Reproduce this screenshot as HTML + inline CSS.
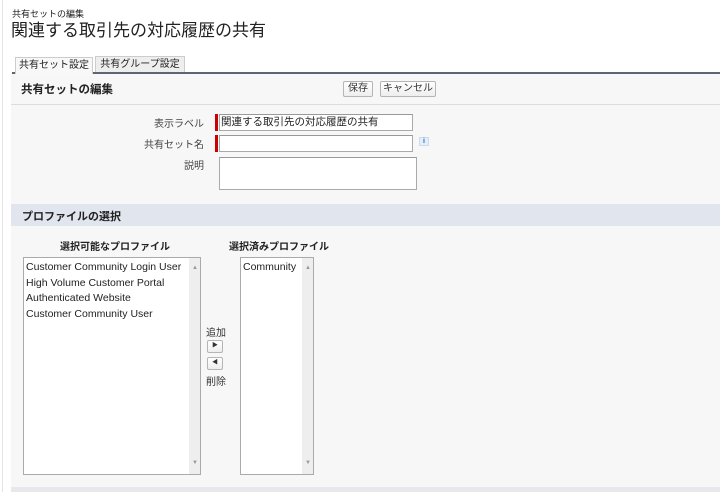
<!DOCTYPE html>
<html><head><meta charset="utf-8"><style>
*{margin:0;padding:0;box-sizing:border-box}
body{width:720px;height:492px;overflow:hidden;background:#fff;font-family:"Liberation Sans","Noto Sans CJK JP",sans-serif;color:#222;position:relative}
.a{position:absolute}
.t{font-size:10px}
.lbl{position:absolute;left:100px;width:104px;text-align:right;font-size:10px;color:#444}
.inp{position:absolute;background:#fff;border:1px solid #aaa;border-top-color:#999}
.red{position:absolute;width:3px;background:#c00}
.btn{position:absolute;border:1px solid #b5b5b5;border-radius:2px;background:linear-gradient(#fff,#eee);font-size:10px;text-align:center;line-height:14px;color:#333}
.list{position:absolute;background:#fff;border:1px solid #aaa;font-size:10.5px;color:#222;line-height:15.5px;padding:2px 0 0 2px}
.sb{position:absolute;top:0;right:0;bottom:0;width:11px;background:#eee}
.arr{position:absolute;right:2px;font-size:6px;color:#999}
</style></head><body>
<div class="a" style="left:2px;top:0;width:1px;height:492px;background:#e4e4e4"></div>
<div class="a t" style="left:12px;top:7px;font-size:9px">共有セットの編集</div>
<div class="a" style="left:11px;top:16px;font-size:17px;color:#222">関連する取引先の対応履歴の共有</div>
<div class="a" style="left:12px;top:72px;width:708px;height:2px;background:#5d6473"></div>
<div class="a" style="left:15px;top:57px;width:78px;height:17px;background:#f8f8f8;border:1px solid #ccc;border-bottom:none;font-size:10px;text-align:center;line-height:16px">共有セット設定</div>
<div class="a" style="left:95px;top:56px;width:90px;height:16px;background:#eee;border:1px solid #ccc;border-bottom:none;font-size:10px;text-align:center;line-height:16px">共有グループ設定</div>
<div class="a" style="left:11px;top:74px;width:709px;height:418px;background:#f7f7f7"></div>
<div class="a" style="left:11px;top:104px;width:709px;height:1px;background:#ddd"></div>
<div class="a" style="left:21px;top:81px;font-size:11.5px;font-weight:bold">共有セットの編集</div>
<div class="btn" style="left:343px;top:81px;width:30px;height:16px">保存</div>
<div class="btn" style="left:380px;top:81px;width:56px;height:16px">キャンセル</div>
<div class="lbl" style="top:115px">表示ラベル</div>
<div class="red" style="left:215px;top:114px;height:17px"></div>
<div class="inp" style="left:219px;top:114px;width:194px;height:17px;font-size:10.5px;line-height:15px;padding-left:1px">関連する取引先の対応履歴の共有</div>
<div class="lbl" style="top:136px">共有セット名</div>
<div class="red" style="left:215px;top:135px;height:17px"></div>
<div class="inp" style="left:219px;top:135px;width:194px;height:17px"></div>
<div class="a" style="left:419px;top:137px;width:10px;height:9px;background:#e4eef8;border:1px solid #cde;font-size:7px;color:#36c;text-align:center;line-height:8px;font-weight:bold">i</div>
<div class="lbl" style="top:157px">説明</div>
<div class="inp" style="left:219px;top:157px;width:198px;height:33px"></div>
<div class="a" style="left:11px;top:204px;width:709px;height:22px;background:#e1e5ee"></div>
<div class="a" style="left:22px;top:208px;font-size:11px;font-weight:bold">プロファイルの選択</div>
<div class="a" style="left:60px;top:238px;font-size:10px;font-weight:bold">選択可能なプロファイル</div>
<div class="a" style="left:229px;top:238px;font-size:10px;font-weight:bold">選択済みプロファイル</div>
<div class="list" style="left:23px;top:257px;width:178px;height:218px">Customer Community Login User<br>High Volume Customer Portal<br>Authenticated Website<br>Customer Community User<div class="sb"><span class="arr" style="top:3px">▲</span><span class="arr" style="bottom:3px">▼</span></div></div>
<div class="list" style="left:240px;top:257px;width:74px;height:218px">Community<div class="sb"><span class="arr" style="top:3px">▲</span><span class="arr" style="bottom:3px">▼</span></div></div>
<div class="a t" style="left:206px;top:324px;color:#333">追加</div>
<div class="btn" style="left:207px;top:340px;width:16px;height:13px;font-size:6px;line-height:11px">▶</div>
<div class="btn" style="left:207px;top:357px;width:16px;height:13px;font-size:6px;line-height:11px">◀</div>
<div class="a t" style="left:206px;top:373px;color:#333">削除</div>
<div class="a" style="left:11px;top:487px;width:709px;height:5px;background:#e8e8ec"></div>
</body></html>
